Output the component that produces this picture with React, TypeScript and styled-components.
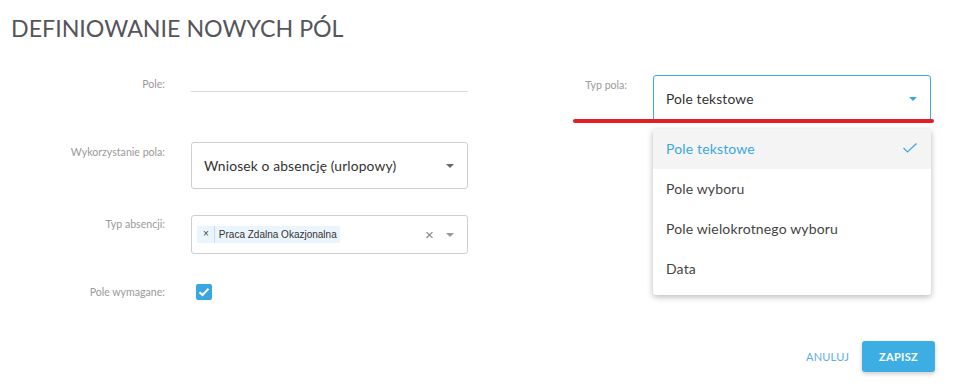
import styled, { createGlobalStyle } from 'styled-components';

const GlobalStyle = createGlobalStyle`
  body {
    margin: 0;
    background: #fff;
    font-family: Lato, "Open Sans", sans-serif;
  }
`;

const Page = styled.div`
  position: relative;
  width: 972px;
  height: 388px;
  padding: 13px 11px 0;
  box-sizing: border-box;
`;

const Title = styled.h1`
  margin: 0;
  font-size: 23.2px;
  font-weight: 400;
  line-height: 30px;
  color: #55555b;
`;

const Form = styled.div`
  display: flex;
  margin-top: 32px;
`;

const Column = styled.div`
  display: flex;
  flex-direction: column;
`;

const Row = styled.div<{ $labelWidth: number; $gap: number; $mt?: number; $center?: boolean }>`
  display: grid;
  grid-template-columns: ${(p) => p.$labelWidth}px 277px;
  column-gap: ${(p) => p.$gap}px;
  align-items: ${(p) => (p.$center ? 'center' : 'start')};
  margin-top: ${(p) => p.$mt ?? 0}px;
`;

const Label = styled.div<{ $pt?: number }>`
  text-align: right;
  font-size: 10.6px;
  line-height: 13px;
  color: #9a9a9a;
  padding-top: ${(p) => p.$pt ?? 0}px;
`;

const LineInput = styled.div`
  height: 16px;
  border-bottom: 1px solid #dcdcdc;
`;

const SelectBox = styled.div<{ $active?: boolean; $h: number }>`
  position: relative;
  box-sizing: border-box;
  height: ${(p) => p.$h}px;
  border: 1px solid ${(p) => (p.$active ? '#3ba9e0' : '#cfcfcf')};
  border-radius: 3px;
  display: flex;
  align-items: center;
  padding: 0 12px;
  font-size: 13.8px;
  color: #333;
  letter-spacing: 0.15px;
`;

const SelectText = styled.span`
  flex: 1;
`;

const Caret = styled.span<{ $color: string }>`
  width: 0;
  height: 0;
  border-left: 4px solid transparent;
  border-right: 4px solid transparent;
  border-top: 4px solid ${(p) => p.$color};
  margin-right: 1px;
`;

const Chip = styled.span`
  display: inline-flex;
  align-items: center;
  height: 17px;
  background: #ebf5fd;
  font-family: "Liberation Sans", Arial, sans-serif;
  font-size: 10px;
  color: #333;
  letter-spacing: 0;
`;

const ChipRemove = styled.span`
  padding: 0 5px 0 6px;
  color: #444;
  font-size: 10px;
  border-right: 1px solid #c5ddf0;
  height: 17px;
  line-height: 16px;
`;

const ChipLabel = styled.span`
  padding: 0 3px 0 4px;
`;

const Clear = styled.span`
  margin-left: auto;
  margin-right: 12px;
  color: #888;
  font-family: "Liberation Sans", Arial, sans-serif;
  font-size: 15px;
  line-height: 15px;
`;

const Checkbox = styled.span`
  display: flex;
  align-items: center;
  justify-content: center;
  width: 16px;
  height: 16px;
  margin-left: 5px;
  border-radius: 2px;
  background: #3aa6df;
`;

const Dropdown = styled.ul`
  position: absolute;
  top: 129px;
  left: 653px;
  width: 278px;
  margin: 0;
  padding: 0 0 6px;
  list-style: none;
  background: #fff;
  border-radius: 3px;
  box-shadow: 0 2px 6px rgba(0, 0, 0, 0.28);
`;

const Option = styled.li<{ $selected?: boolean }>`
  display: flex;
  align-items: center;
  justify-content: space-between;
  height: 40px;
  padding: 0 14px 2px 13px;
  box-sizing: border-box;
  font-size: 14px;
  letter-spacing: 0.15px;
  color: ${(p) => (p.$selected ? '#3ba9e0' : '#444')};
  background: ${(p) => (p.$selected ? '#f4f4f4' : '#fff')};
`;

const RedMark = styled.div`
  position: absolute;
  top: 119px;
  left: 573px;
  width: 361px;
  height: 4px;
  border-radius: 2px;
  background: #e21f26;
`;

const Actions = styled.div`
  position: absolute;
  right: 37px;
  bottom: 16px;
  display: flex;
  align-items: center;
  gap: 13px;
`;

const TextButton = styled.button`
  border: none;
  background: none;
  padding: 0;
  font-family: inherit;
  font-size: 11px;
  color: #5aaee3;
  letter-spacing: 0.2px;
`;

const PrimaryButton = styled.button`
  width: 73px;
  height: 31px;
  border: none;
  border-radius: 3px;
  background: #3daee3;
  color: #fff;
  font-family: inherit;
  font-weight: 700;
  font-size: 11px;
  letter-spacing: 0.3px;
  box-shadow: 0 2px 4px rgba(0, 0, 0, 0.2);
`;

export default function App() {
  return (
    <Page>
      <GlobalStyle />
      <Title>DEFINIOWANIE NOWYCH PÓL</Title>
      <Form>
        <Column>
          <Row $labelWidth={154} $gap={26}>
            <Label $pt={3}>Pole:</Label>
            <LineInput />
          </Row>
          <Row $labelWidth={154} $gap={26} $mt={50}>
            <Label $pt={4}>Wykorzystanie pola:</Label>
            <SelectBox $h={47}>
              <SelectText>Wniosek o absencję (urlopowy)</SelectText>
              <Caret $color="#666" />
            </SelectBox>
          </Row>
          <Row $labelWidth={154} $gap={26} $mt={26}>
            <Label $pt={3}>Typ absencji:</Label>
            <SelectBox $h={39} style={{ paddingLeft: 5 }}>
              <Chip>
                <ChipRemove>×</ChipRemove>
                <ChipLabel>Praca Zdalna Okazjonalna</ChipLabel>
              </Chip>
              <Clear>×</Clear>
              <Caret $color="#999" />
            </SelectBox>
          </Row>
          <Row $labelWidth={154} $gap={26} $mt={30} $center>
            <Label>Pole wymagane:</Label>
            <Checkbox>
              <svg width="12" height="10" viewBox="0 0 12 10">
                <path d="M1.5 5.2 L4.5 8 L10.5 1.8" fill="none" stroke="#fff" strokeWidth="2" />
              </svg>
            </Checkbox>
          </Row>
        </Column>
        <Column>
          <Row $labelWidth={159} $gap={26}>
            <Label $pt={4}>Typ pola:</Label>
            <SelectBox $active $h={47} style={{ width: 278 }}>
              <SelectText>Pole tekstowe</SelectText>
              <Caret $color="#3ba9e0" />
            </SelectBox>
          </Row>
        </Column>
      </Form>
      <RedMark />
      <Dropdown>
        <Option $selected>
          Pole tekstowe
          <svg width="14" height="10" viewBox="0 0 14 10">
            <path d="M0.5 5 L4.5 9 L13.5 0.5" fill="none" stroke="#3ba9e0" strokeWidth="1.2" />
          </svg>
        </Option>
        <Option>Pole wyboru</Option>
        <Option>Pole wielokrotnego wyboru</Option>
        <Option>Data</Option>
      </Dropdown>
      <Actions>
        <TextButton>ANULUJ</TextButton>
        <PrimaryButton>ZAPISZ</PrimaryButton>
      </Actions>
    </Page>
  );
}
